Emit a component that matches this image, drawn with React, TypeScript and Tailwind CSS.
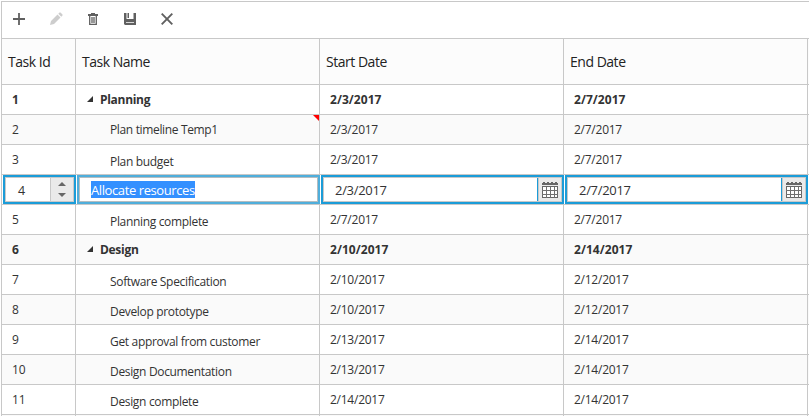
import React from "react";

type Task = { id: number; name: string; start: string; end: string; parent?: boolean; note?: boolean };

const before: Task[] = [
  { id: 1, name: "Planning", start: "2/3/2017", end: "2/7/2017", parent: true },
  { id: 2, name: "Plan timeline Temp1", start: "2/3/2017", end: "2/7/2017", note: true },
  { id: 3, name: "Plan budget", start: "2/3/2017", end: "2/7/2017" },
];
const after: Task[] = [
  { id: 5, name: "Planning complete", start: "2/7/2017", end: "2/7/2017" },
  { id: 6, name: "Design", start: "2/10/2017", end: "2/14/2017", parent: true },
  { id: 7, name: "Software Specification", start: "2/10/2017", end: "2/12/2017" },
  { id: 8, name: "Develop prototype", start: "2/10/2017", end: "2/12/2017" },
  { id: 9, name: "Get approval from customer", start: "2/13/2017", end: "2/14/2017" },
  { id: 10, name: "Design Documentation", start: "2/13/2017", end: "2/14/2017" },
  { id: 11, name: "Design complete", start: "2/14/2017", end: "2/14/2017" },
];

const columns = "grid grid-cols-[74px_244px_244px_244px]";

function Row({ task }: { task: Task }) {
  const cell = "border-r border-[#c8c8c8] leading-[29px] h-[29px] ";
  const date = cell + "pl-[10px] " + (task.parent ? "tracking-[0.05px]" : "tracking-[-0.25px]");
  return (
    <div className={`${columns} border-b border-[#c8c8c8] ${task.id % 2 ? "bg-white" : "bg-[#fafafa]"} ${task.parent ? "font-bold" : ""}`}>
      <div className={cell + "pl-[10px] tracking-[-0.2px]"}>{task.id}</div>
      <div className={cell + "relative flex " + (task.parent ? "pl-[11px] tracking-[-0.3px]" : task.note ? "pl-[34px] tracking-[-0.35px]" : "pl-[34px] pt-[2px] tracking-[-0.33px]")}>
        {task.parent && (
          <svg className="mt-[11px] mr-[7px] h-[6px] w-[6px]" viewBox="0 0 6 6">
            <path d="M6 0v6H0z" fill="#333" />
          </svg>
        )}
        <span>{task.name}</span>
        {task.note && (
          <svg className="absolute top-0 right-0 h-[6px] w-[6px]" viewBox="0 0 6 6">
            <path d="M0 0h6v6z" fill="#f00" />
          </svg>
        )}
      </div>
      <div className={date}>{task.start}</div>
      <div className={date}>{task.end}</div>
    </div>
  );
}

function CalendarButton() {
  return (
    <div className="flex w-[24px] justify-center border-l border-[#1b9cd8] bg-[#eaeaea] shadow-[inset_1px_0_0_#c8c8c8]">
      <svg className="mt-[3px] ml-px h-[17px] w-[16px]" viewBox="0 0 16 17" shapeRendering="crispEdges">
        <path d="M0 2h1v-1h2v1h2v-1h2v1h2v-1h2v1h2v-1h2v1h1v2H0z" fill="#666" />
        <path d="M.5 5.500h15v11H.5z" fill="#fff" stroke="#666" />
        <path d="M0 9.500h16M0 13.500h16M4.500 6v11M8.500 6v11M12.500 6v11" stroke="#707070" />
      </svg>
    </div>
  );
}

function DateEditor({ value }: { value: string }) {
  return (
    <div className="pl-px">
      <div className="h-[29px] border-2 border-[#1b9cd8]">
        <div className="flex h-[25px] border border-[#c8c8c8] bg-white">
          <span className="flex-1 pl-[11px] pt-px text-[13px] leading-[23px] tracking-[-0.3px]">{value}</span>
          <CalendarButton />
        </div>
      </div>
    </div>
  );
}

function EditRow() {
  return (
    <div className={`${columns} border-b border-[#c8c8c8] bg-white`}>
      <div className="pl-px">
        <div className="h-[29px] border-2 border-[#1b9cd8]">
          <div className="flex h-[25px] border border-[#c8c8c8]">
            <span className="flex-1 pl-[12px] pt-px text-[12.5px] leading-[23px]">4</span>
            <div className="flex w-[23px] flex-col items-center justify-center gap-[7px] border-l border-[#c8c8c8] bg-[#eaeaea]">
              <svg className="h-[4px] w-[8px]" viewBox="0 0 8 4"><path d="M0 4l4-4 4 4z" fill="#666" /></svg>
              <svg className="h-[4px] w-[8px]" viewBox="0 0 8 4"><path d="M0 0h8L4 4z" fill="#666" /></svg>
            </div>
          </div>
        </div>
      </div>
      <div className="pl-px">
        <div className="h-[29px] border-2 border-[#4faedb]">
          <div className="flex h-[25px] items-center border border-[#b4bcc0] bg-white pl-[11px]">
            <span className="h-[17px] bg-[#3390ff] text-[13px] leading-[18px] tracking-[-0.4px] text-white">Allocate resources</span>
          </div>
        </div>
      </div>
      <DateEditor value="2/3/2017" />
      <DateEditor value="2/7/2017" />
    </div>
  );
}

function Toolbar() {
  return (
    <div className="flex h-[37px] items-center gap-[21px] border-b border-[#c8c8c8] pb-[2px] pl-[9px] text-[#606060]">
      <svg className="h-4 w-4" viewBox="0 0 16 16"><path d="M8 2v12M2 8h12" stroke="currentColor" strokeWidth="1.8" /></svg>
      <svg className="h-4 w-4" viewBox="0 0 16 16" fill="#cdcdcd"><path d="M2 14l1-4 6.500-6.500 3 3L6 13zM10.300 2.700l1-1q.7-.7 1.400 0l1.600 1.600q.7.700 0 1.400l-1 1z" /></svg>
      <svg className="h-4 w-4" viewBox="0 0 16 16"><path d="M3 5V3h3V2h4v1h3v2z" fill="currentColor" /><path d="M4.700 5v8.300h6.600V5M7 6v6M9 6v6" fill="none" stroke="currentColor" strokeWidth="1.300" /></svg>
      <svg className="h-4 w-4" viewBox="0 0 16 16"><path d="M2 2h12v12H3l-1-1z" fill="currentColor" /><path d="M4.500 2h7v6h-7zM4 11.300h8v.7H4z" fill="#fff" /><path d="M5.500 2H7v5H5.500z" fill="currentColor" /></svg>
      <svg className="h-4 w-4" viewBox="0 0 16 16"><path d="M2.700 2.700l10.600 10.600M13.300 2.700L2.700 13.300" stroke="currentColor" strokeWidth="1.900" /></svg>
    </div>
  );
}

export default function App() {
  const head = "border-r border-[#c8c8c8] pl-[6px]";
  return (
    <div className="h-[416px] overflow-hidden bg-white pt-px pl-px font-['Open_Sans','Noto_Sans',sans-serif] text-[12px] text-[#333] whitespace-nowrap">
      <div className="h-[415px] border-t border-l border-[#c8c8c8]">
        <Toolbar />
        <div className={`${columns} h-[46px] border-b border-[#c8c8c8] bg-[#fcfcfc] text-[14px] font-medium leading-[45px] tracking-[-0.48px] text-[#222]`}>
          <div className={head}>Task Id</div>
          <div className={head}>Task Name</div>
          <div className={head}>Start Date</div>
          <div className={head}>End Date</div>
        </div>
        {before.map((t) => <Row key={t.id} task={t} />)}
        <EditRow />
        {after.map((t) => <Row key={t.id} task={t} />)}
        <div className={columns}>
          {[0, 1, 2, 3].map((i) => <div key={i} className="h-px border-r border-[#c8c8c8] bg-[#fafafa]" />)}
        </div>
      </div>
    </div>
  );
}
